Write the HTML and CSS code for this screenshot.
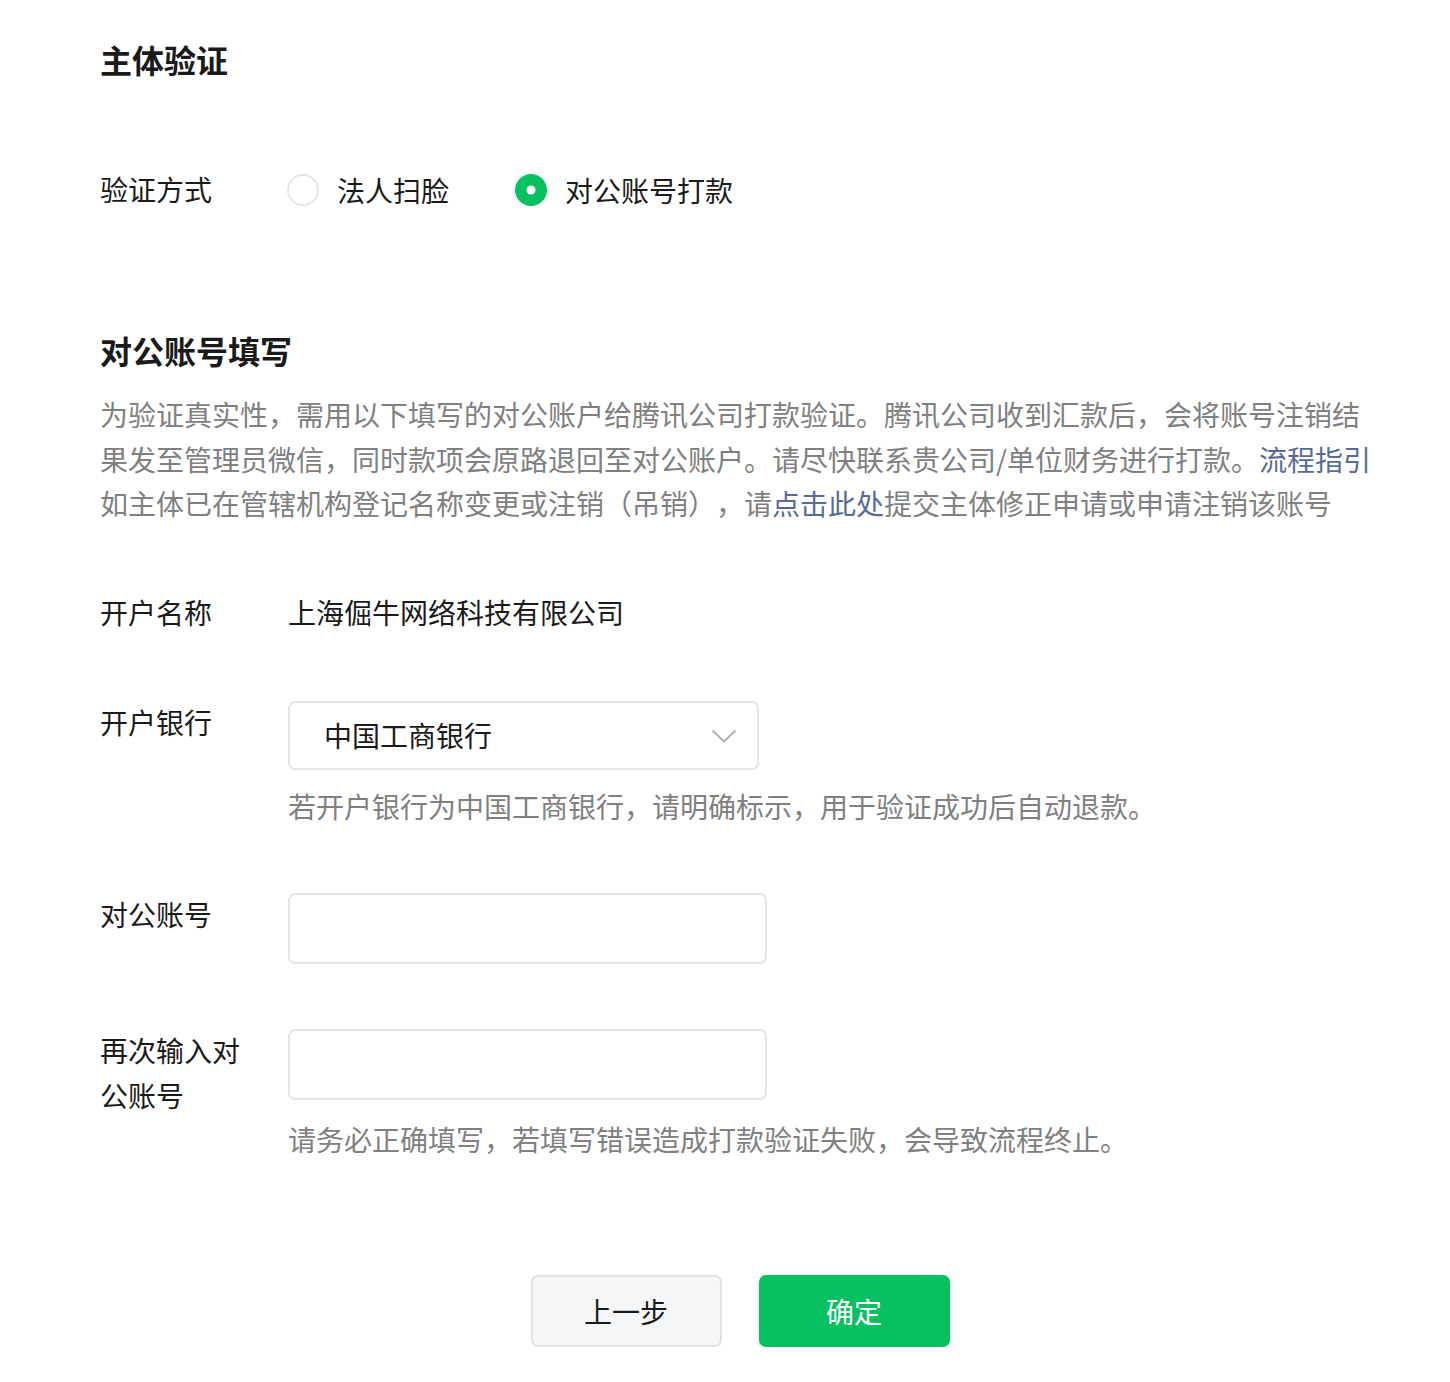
FILE: index.html
```html
<!DOCTYPE html>
<html lang="zh-CN">
<head>
<meta charset="utf-8">
<title>主体验证</title>
<link rel="stylesheet" href="styles.css">
</head>
<body>
<div class="page">
  <h1 class="title">主体验证</h1>

  <div class="radio-row">
    <div class="row-label">验证方式</div>
    <div class="radios">
      <label class="radio"><span class="radio-circle"></span><span class="radio-text">法人扫脸</span></label>
      <label class="radio checked"><span class="radio-circle"></span><span class="radio-text">对公账号打款</span></label>
    </div>
  </div>

  <h2 class="heading">对公账号填写</h2>
  <p class="desc">为验证真实性，需用以下填写的对公账户给腾讯公司打款验证。腾讯公司收到汇款后，会将账号注销结果发至管理员微信，同时款项会原路退回至对公账户。请尽快联系贵公司/单位财务进行打款。<a class="link" href="#">流程指引</a><br>如主体已在管辖机构登记名称变更或注销（吊销），请<a class="link" href="#">点击此处</a>提交主体修正申请或申请注销该账号</p>

  <div class="form-row">
    <div class="row-label">开户名称</div>
    <div class="control"><div class="value">上海倔牛网络科技有限公司</div></div>
  </div>

  <div class="form-row form-row-bank">
    <div class="row-label">开户银行</div>
    <div class="control">
      <div class="select">
        <span class="select-text">中国工商银行</span>
        <svg class="chevron" width="26" height="15" viewBox="0 0 26 15"><path d="M1.5 1.5 L13 12.5 L24.5 1.5" fill="none" stroke="#b2b2b2" stroke-width="2"/></svg>
      </div>
      <div class="hint">若开户银行为中国工商银行，请明确标示，用于验证成功后自动退款。</div>
    </div>
  </div>

  <div class="form-row">
    <div class="row-label">对公账号</div>
    <div class="control"><div class="input"></div></div>
  </div>

  <div class="form-row">
    <div class="row-label">再次输入对公账号</div>
    <div class="control">
      <div class="input"></div>
      <div class="hint hint-2">请务必正确填写，若填写错误造成打款验证失败，会导致流程终止。</div>
    </div>
  </div>

  <div class="actions">
    <button class="btn btn-default">上一步</button>
    <button class="btn btn-primary">确定</button>
  </div>
</div>
</body>
</html>
```

FILE: styles.css
```css
* { box-sizing: border-box; }
html, body { margin: 0; padding: 0; background: #fff; }
body {
  font-family: "Noto Sans CJK SC", "Noto Sans", sans-serif;
  color: #1a1a1a;
  font-size: 28px;
  text-spacing-trim: space-all;
}
.page {
  width: 1380px;
  padding: 37px 0 0 100px;
}
.title {
  margin: 0;
  font-size: 32px;
  line-height: 44px;
  font-weight: 700;
  color: #1a1a1a;
}
.radio-row {
  display: flex;
  margin-top: 86px;
  line-height: 44px;
}
.row-label {
  width: 160px;
  margin-right: 28px;
  flex: none;
  font-size: 28px;
  line-height: 45px;
  color: #1a1a1a;
}
.radios { display: flex; align-items: center; }
.radio {
  display: flex;
  align-items: center;
  margin-right: 67px;
  font-size: 28px;
  color: #1a1a1a;
}
.radio-circle {
  width: 32px;
  height: 32px;
  border: 2px solid #e5e5e5;
  border-radius: 50%;
  margin-right: 18px;
  margin-left: -1px;
  position: relative;
}
.radio.checked .radio-circle {
  background: #07c160;
  border-color: #07c160;
}
.radio.checked .radio-circle::after {
  content: "";
  position: absolute;
  width: 9px;
  height: 9px;
  border-radius: 50%;
  background: #fff;
  left: 50%;
  top: 50%;
  transform: translate(-50%, -50%);
}
.heading {
  margin: 116px 0 0;
  font-size: 32px;
  line-height: 44px;
  font-weight: 700;
  color: #1a1a1a;
}
.desc {
  margin: 20px 0 0;
  font-size: 28px;
  line-height: 44.5px;
  color: #808080;
}
.link { color: #576b95; text-decoration: none; }
.form-row {
  display: flex;
  align-items: flex-start;
  margin-top: 64px;
}
.form-row-bank { margin-top: 65px; }
.control { flex: none; }
.value {
  font-size: 28px;
  line-height: 45px;
  color: #1a1a1a;
}
.select {
  width: 471px;
  height: 69px;
  margin-top: 1px;
  border: 2px solid #e5e5e5;
  border-radius: 7px;
  display: flex;
  align-items: center;
  justify-content: space-between;
  padding: 0 20px 0 34px;
}
.select-text { font-size: 28px; color: #1a1a1a; line-height: 40px; }
.chevron { display: block; margin-top: 2px; }
.hint {
  margin-top: 14px;
  font-size: 28px;
  line-height: 44px;
  color: #808080;
}
.hint-2 { margin-top: 17px; }
.input {
  width: 479px;
  height: 71px;
  margin-top: 1px;
  border: 2px solid #e5e5e5;
  border-radius: 7px;
}
.actions {
  display: flex;
  justify-content: center;
  gap: 37px;
  margin-top: 114px;
}
.btn {
  width: 191px;
  height: 72px;
  border-radius: 7px;
  font-family: "Noto Sans CJK SC", sans-serif;
  font-size: 28px;
  cursor: pointer;
}
.btn-default {
  background: #f5f6f7;
  border: 2px solid #e2e2e2;
  color: #1a1a1a;
}
.btn-primary {
  background: #07c160;
  border: none;
  color: #fff;
}
```
